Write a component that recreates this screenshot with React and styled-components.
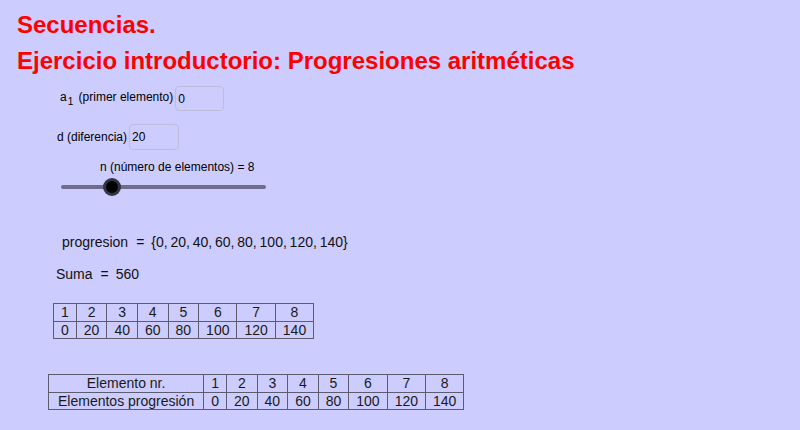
import React from "react";
import styled, { createGlobalStyle } from "styled-components";

const first = 0;
const diff = 20;
const count = 8;
const terms = Array.from({ length: count }, (_, i) => first + i * diff);
const total = terms.reduce((acc, t) => acc + t, 0);

// thin space used after the commas in the set notation
const THIN = "\u2009";

const GlobalStyle = createGlobalStyle`
  html, body {
    margin: 0;
    background: #ccccff;
  }
  body {
    font-family: "Liberation Sans", Arial, sans-serif;
    color: #000;
  }
`;

const Applet = styled.div`
  width: 800px;
  height: 430px;
  background: #ccccff;
  display: flex;
  flex-direction: column;
  align-items: flex-start;
  padding-top: 13px;
  box-sizing: border-box;
  overflow: hidden;
`;

const Heading = styled.div`
  margin: 0 0 ${(p) => p.$gap || 0}px 17px;
  font-size: 24px;
  line-height: 24px;
  font-weight: bold;
  color: #ff0000;
`;

const FieldRow = styled.div`
  display: flex;
  align-items: center;
  gap: 2px;
  margin: ${(p) => p.$top}px 0 0 ${(p) => p.$left}px;
  font-size: 12px;
`;

const Label = styled.span`
  white-space: nowrap;
`;

const Sub = styled.sub`
  font-size: 10px;
  vertical-align: -4px;
  margin: 0 2px 0 1px;
`;

const InputBox = styled.div`
  width: ${(p) => p.$w}px;
  height: ${(p) => p.$h}px;
  box-sizing: border-box;
  border: 1px solid #bdbddb;
  border-radius: 4px;
  padding-left: 2px;
  display: flex;
  align-items: center;
  font-size: 12px;
`;

const SliderBlock = styled.div`
  margin: 10px 0 0 61px;
  width: 205px;
  display: flex;
  flex-direction: column;
`;

const SliderCaption = styled.div`
  margin-left: 39px;
  font-size: 12px;
  line-height: 14px;
`;

const Track = styled.div`
  position: relative;
  margin-top: 11px;
  height: 4px;
  border-radius: 2px;
  background: #6e6e8c;
`;

const Knob = styled.div`
  position: absolute;
  top: 50%;
  width: 12px;
  height: 12px;
  border-radius: 50%;
  background: #000;
  border: 3px solid rgba(70, 70, 90, 0.75);
  transform: translate(-50%, -50%);
`;

const MathLine = styled.div`
  margin: ${(p) => p.$top}px 0 0 ${(p) => p.$left}px;
  font-family: "Liberation Sans", Arial, sans-serif;
  font-size: 14px;
  line-height: 18px;
  white-space: pre;
  color: #111;
`;

const Eq = styled.span`
  margin: 0 7px 0 8px;
`;

const Grid = styled.table`
  margin: ${(p) => p.$top}px 0 0 ${(p) => p.$left}px;
  border-collapse: collapse;
  font-family: "Liberation Sans", Arial, sans-serif;
  font-size: 14px;
  color: #1a1a1a;
`;

const Cell = styled.td`
  border: 1px solid #5c5c6e;
  padding: 0 ${(p) => p.$pad ?? 7}px;
  height: 16.5px;
  line-height: 16px;
  text-align: center;
  white-space: nowrap;
`;

const slider = { min: 1, max: 29 };

export default function App() {
  const pos = ((count - slider.min) / (slider.max - slider.min)) * 100;

  return (
    <>
      <GlobalStyle />
      <Applet>
        <Heading $gap={12}>Secuencias.</Heading>
        <Heading>Ejercicio introductorio: Progresiones aritméticas</Heading>

        <FieldRow $top={13} $left={60}>
          <Label>
            a<Sub>1</Sub> (primer elemento)
          </Label>
          <InputBox $w={49} $h={25}>{first}</InputBox>
        </FieldRow>

        <FieldRow $top={13} $left={57}>
          <Label>d (diferencia)</Label>
          <InputBox $w={50} $h={26}>{diff}</InputBox>
        </FieldRow>

        <SliderBlock>
          <SliderCaption>n (número de elementos) = {count}</SliderCaption>
          <Track>
            <Knob style={{ left: `${pos}%` }} />
          </Track>
        </SliderBlock>

        <MathLine $top={44} $left={62}>
          progresion<Eq>=</Eq>
          {"{" + terms.join("," + THIN) + "}"}
        </MathLine>

        <MathLine $top={14} $left={56}>
          Suma<Eq>=</Eq>
          {total}
        </MathLine>

        <Grid $top={20} $left={53}>
          <tbody>
            <tr>
              {terms.map((_, i) => (
                <Cell key={i}>{i + 1}</Cell>
              ))}
            </tr>
            <tr>
              {terms.map((t, i) => (
                <Cell key={i}>{t}</Cell>
              ))}
            </tr>
          </tbody>
        </Grid>

        <Grid $top={35} $left={48}>
          <tbody>
            <tr>
              <Cell $pad={9}>Elemento nr.</Cell>
              {terms.map((_, i) => (
                <Cell key={i}>{i + 1}</Cell>
              ))}
            </tr>
            <tr>
              <Cell $pad={9}>Elementos progresión</Cell>
              {terms.map((t, i) => (
                <Cell key={i}>{t}</Cell>
              ))}
            </tr>
          </tbody>
        </Grid>
      </Applet>
    </>
  );
}
